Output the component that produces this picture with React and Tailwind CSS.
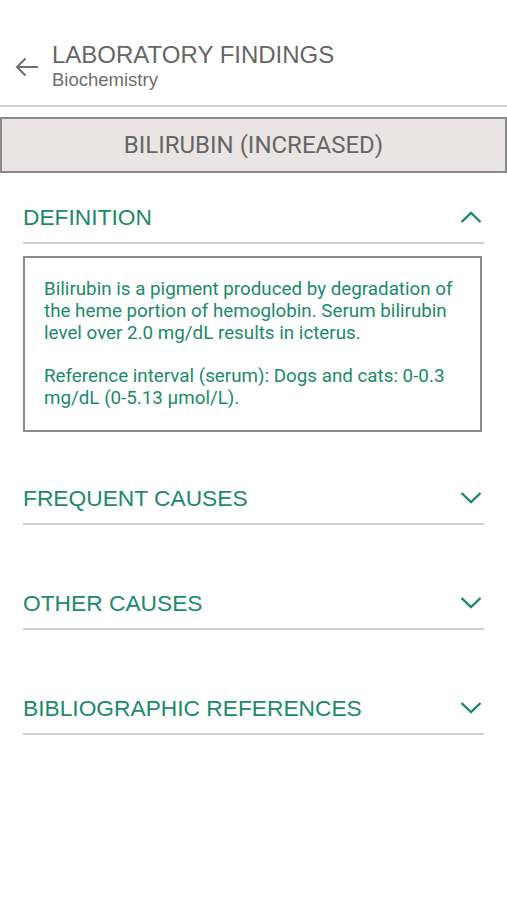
import React from "react";

const green = "text-[#1b8a6b]";
const arial = { fontFamily: "'Liberation Sans', Arial, sans-serif" };

function ChevronUp() {
  return (
    <svg width="22" height="12" viewBox="0 0 22 12" className="block">
      <path d="M1.5 11 L11 2 L20.5 11" fill="none" stroke="#1b8a6b" strokeWidth="2.4" />
    </svg>
  );
}
function ChevronDown() {
  return (
    <svg width="22" height="12" viewBox="0 0 22 12" className="block">
      <path d="M1.5 1 L11 10 L20.5 1" fill="none" stroke="#1b8a6b" strokeWidth="2.4" />
    </svg>
  );
}

function SectionHeader({ title, open, className = "" }) {
  return (
    <div className={`mx-[23px] h-[52px] flex items-center justify-between border-b-2 border-[#d0d0d0] ${className}`}>
      <span className={`text-[22.75px] ${green} leading-none`} style={arial}>{title}</span>
      <span className="mr-[2px]">{open ? <ChevronUp /> : <ChevronDown />}</span>
    </div>
  );
}

export default function App() {
  return (
    <div className="w-[507px] h-[900px] bg-white overflow-hidden" style={{ fontFamily: "Roboto, 'Noto Sans', sans-serif" }}>
      <div className="h-[107px] flex items-start border-b-2 border-[#d2d2d2]">
        <div className="w-[52px] pl-[15px] pt-[57px]">
          <svg width="24" height="20" viewBox="0 0 24 20" className="block">
            <path d="M23 10 H2 M10.5 1.5 L2 10 L10.5 18.5" fill="none" stroke="#6f6f6f" strokeWidth="2" />
          </svg>
        </div>
        <div className="pt-[41px] flex flex-col">
          <span className="text-[24px] leading-[28px] text-[#666666]" style={arial}>LABORATORY FINDINGS</span>
          <span className="text-[18.5px] leading-[22px] mt-[0px] text-[#6f6f6f]" style={arial}>Biochemistry</span>
        </div>
      </div>
      <div className="mt-[10px] h-[56px] border-2 border-[#8a8a8a] bg-[#e8e5e4] flex items-center justify-center">
        <span className="text-[24px] text-[#666666]">BILIRUBIN (INCREASED)</span>
      </div>

      <SectionHeader title="DEFINITION" open className="mt-[19px]" />
      <div className="mx-[23px] w-[459px] mt-[12px] border-2 border-[#8c8c8c] pl-[19px] pr-[22px] pt-[20px] pb-[21px]">
        <p className={`text-[18.8px] leading-[22px] ${green}`}>
          Bilirubin is a pigment produced by degradation of the heme portion of hemoglobin. Serum bilirubin level over 2.0 mg/dL results in icterus.
        </p>
        <p className={`text-[18.8px] leading-[22px] ${green} mt-[21px]`}>
          Reference interval (serum): Dogs and cats: 0-0.3 mg/dL (0-5.13 µmol/L).
        </p>
      </div>

      <SectionHeader title="FREQUENT CAUSES" className="mt-[41px]" />
      <SectionHeader title="OTHER CAUSES" className="mt-[53px]" />
      <SectionHeader title="BIBLIOGRAPHIC REFERENCES" className="mt-[53px]" />
    </div>
  );
}
